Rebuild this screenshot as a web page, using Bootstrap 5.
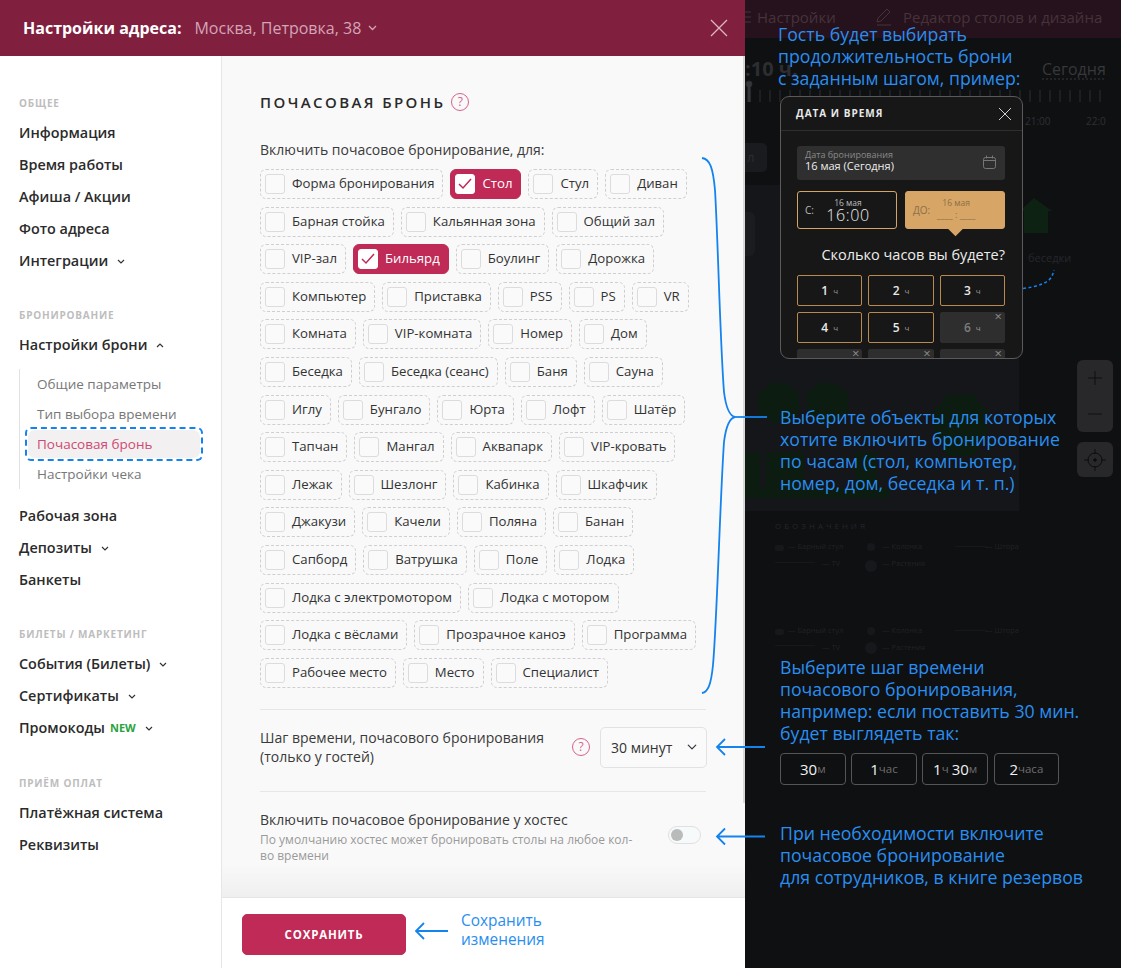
<!doctype html>
<html lang="ru"><head><meta charset="utf-8">
<title>Почасовая бронь</title>
<link href="https://cdn.jsdelivr.net/npm/bootstrap@5.3.0/dist/css/bootstrap.min.css" rel="stylesheet">
<style>
html,body{margin:0;height:968px;overflow:hidden;background:#0f1012;font-family:"Open Sans","Liberation Sans",sans-serif;color:#2a2a2a}
.stage{position:relative;width:1121px;height:968px;overflow:hidden}
.panel{width:745px;height:968px;background:#fff;position:relative;z-index:2}
.tophead{height:56px;background:#811f3f;padding:0 23px}
.tophead b{font-size:16px;font-weight:700;color:#fff}
.tophead span{font-size:16px;color:#d3a5b6;margin-left:13px}
.tophead .chev{color:#d3a5b6;margin-left:7px}
.xbtn{margin-left:auto;color:#dcb9c5;margin-right:-6px}
.sidecol{width:222px;border-right:1px solid #e6e6e6;padding:41px 0 0 19px;flex:none}
.grp{font-size:10px;font-weight:700;letter-spacing:.8px;color:#bdbdbd;line-height:12px;margin-bottom:8px}
.grpgap{margin-top:32px}
.grpgap.wide{margin-top:33px}
.sidecol .nav-link{padding:0;height:32px;line-height:32px;font-size:14.4px;font-weight:550;color:#2b2b2b;display:flex;align-items:center}
.chev{display:inline-block;margin-left:9px;flex:none}
.newtag{color:#2aa33e;font-size:11px;font-weight:700;margin-left:5px}
.subnav{border-left:1px solid #e2e2e2;margin:8px 0 11px;padding:0}
.subnav a{display:block;height:30px;line-height:30px;font-size:13.5px;color:#777;padding-left:17px;text-decoration:none;font-weight:400}
.subnav a.cur{color:#cf4a73;background:#f2f0f1;border-radius:7px;width:172px;padding-left:9px;position:relative;height:28px;line-height:28px;margin:1px 0 1px 8px}
.cur::after{content:"";position:absolute;inset:-3px;border:2px dashed #1483ee;border-radius:6px}
.mainwrap{flex:1;min-width:0;position:relative;display:flex;flex-direction:column}
.scrollarea{flex:1;background:#f9f9f9;padding:33px 38px 0;position:relative;overflow:hidden}
.scrollarea::before{content:"";position:absolute;left:0;right:0;bottom:0;height:34px;background:linear-gradient(rgba(240,240,240,0),#efefef)}
.scrollarea::after{content:"";position:absolute;top:0;right:0;width:2px;bottom:94px;background:#d9d9d9}
.ttl{font-size:15px;font-weight:600;letter-spacing:2.4px;color:#2a2a2a;margin:0;line-height:26px}
.qm{width:18px;height:18px;border:1px solid #d9628a;color:#d9628a;border-radius:50%;font-size:12px;line-height:16px;text-align:center;flex:none;display:inline-block}
.lbl{font-size:14px;line-height:20px;color:#3a3a3a;margin:25px 0 9px}
.chips{display:flex;flex-wrap:wrap;gap:7.6px 7px;width:446px}
.chipx{height:30px;border:1px dashed #cfcfcf;border-radius:6px;display:flex;align-items:center;padding:0 8px 0 4px;font-size:13.2px;color:#333;white-space:nowrap}
.chipx i{display:block;width:20px;height:20px;border:1px solid #dcdcdc;border-radius:3px;background:#fafafa;margin-right:7px;flex:none}
.chipx.on{background:#bf2a56;border:1px solid #bf2a56;color:#fff}
.chipx.on i{background:#fff;border-color:#fff;display:flex;align-items:center;justify-content:center}
.rule{border-top:1px solid #e6e6e6;margin:0;opacity:1;width:446px}
.steprow{width:446px;height:81px;padding-bottom:6px}
.steprow p,.hostrow p{font-size:14px;line-height:19px;color:#3a3a3a;margin:0}
.stepsel{width:107px;height:41px;font-size:14px;background-color:#fafafa;border:1px solid #e2e2e2;padding:0 10px;border-radius:5px;color:#333;background-position:right 8px center;background-size:12px 10px;box-shadow:none;margin-right:-1px}
.hostrow{width:446px;padding-top:18px}
.hostrow small{display:block;font-size:12px;line-height:16px;color:#9a9a9a;margin-top:3px;width:380px}
.swwrap{padding:0;margin:2px 5px 0 0;min-height:0}
.swwrap .form-check-input{width:33px;height:18px;margin:0;float:none;background-color:#f7fafa;border:1px solid #e0e0e0}
.footbar{height:71px;background:#fff;border-top:1px solid #e6e6e6;padding:0 0 0 20px;flex:none}
.savebtn{width:164px;height:41px;background:#bf2a56;border:1px solid #bf2a56;color:#fff;font-size:11.5px;font-weight:700;letter-spacing:.8px;border-radius:5px;margin-top:16px}
.savebtn:hover{background:#bf2a56;color:#fff}
.anno{position:absolute;color:#2a8ef0;font-size:17.7px;font-weight:500;line-height:22px;z-index:5;white-space:nowrap}
.savenote{position:absolute;left:461px;top:911px;color:#2a8ef0;font-size:15.4px;line-height:19px;z-index:5}
.overlay{position:absolute;inset:0;z-index:4;pointer-events:none}
/* ghost page behind the dim layer */
.ghost{position:absolute;left:745px;top:0;width:376px;height:968px;color:#2c2d30}
.ghostband{height:38px;background:#25121c}
.gh{position:absolute;white-space:nowrap}
.mapzone{position:absolute;left:0;top:185px;width:274px;height:326px;background:#14161a}
.zoomctl{position:absolute;left:332px;width:36px;background:#28282a;border-radius:6px}
.ghostbtn{position:absolute;left:0;top:143px;width:22px;height:29px;background:#1a1b1e;border-radius:0 5px 5px 0;font-size:13px;line-height:29px;color:#2c2d30;padding-left:2px}
.ghostpill{position:absolute;left:0;top:212px;width:10px;height:44px;background:#1b1c1f;border-radius:0 6px 6px 0}
.demo{position:absolute;left:780px;top:96px;width:243px;height:263px;background:#171717;border:1px solid #5a5a5a;border-radius:9px;overflow:hidden;z-index:5;color:#fff}
.demohead{height:34px;border-bottom:1px solid #2e2e2e;padding:0 10px 0 15px;font-size:10px;font-weight:700;letter-spacing:1px;color:#e8e8e8}
.demobody{padding:15px 17px 0 16px}
.datefld{height:34px;background:#2f2f2f;border-radius:3px;padding:4px 9px 0 8px;position:relative}
.datefld small{display:block;font-size:9px;line-height:10px;color:#8a8a8a}
.datefld div{font-size:11px;line-height:12px;color:#eee}
.datefld svg{position:absolute;right:9px;top:9px}
.timerow{display:grid;grid-template-columns:100px 100px;gap:8px;margin-top:11px}
.tbox{height:38px;border-radius:3px;border:1px solid #d6a565;display:flex;align-items:center;font-size:10px;padding-left:7px;position:relative;color:#bbb}
.tbox .mid{flex:1;text-align:center;line-height:1;padding-right:14px}
.tbox .mid small{display:block;font-size:8.5px;line-height:10px}
.tbox .mid strong{display:block;font-size:16px;font-weight:300;color:#eee;line-height:15px;letter-spacing:.6px}
.tbox.pick{background:#d7a565;color:#8c7048}
.tbox.pick .mid{padding-right:22px}
.tbox.pick::after{content:"";position:absolute;left:44px;bottom:-6px;width:11px;height:11px;background:#d7a565;transform:rotate(45deg)}
.blank{display:block;color:#8c7048;font-size:9px;line-height:14px;letter-spacing:0}
.howlong{font-size:14.5px;text-align:right;color:#ededed;line-height:20px;margin:16px 0 10px}
.hgrid{display:grid;grid-template-columns:repeat(3,1fr);gap:6px}
.hbtn{height:31px;border:1px solid #b98a50;border-radius:2px;display:flex;align-items:center;justify-content:center;font-size:12px;font-weight:600;color:#e9e9e9;position:relative}
.hbtn small{font-size:8px;font-weight:400;color:#999;margin-left:5px}
.hbtn.off{background:#2e2e2e;border-color:#2e2e2e;color:#7c7c7c}
.hbtn.off::after{content:"×";position:absolute;right:2px;top:-4px;font-size:13px;font-weight:400;color:#8a8a8a;line-height:14px}
.tstrip{position:absolute;left:780px;top:753px;display:grid;grid-template-columns:repeat(4,65.6px);gap:5.6px;z-index:5}
.tcell{height:32px;border:1px solid #555;border-radius:4px;display:flex;align-items:center;justify-content:center;color:#f2f2f2;font-size:15px;white-space:nowrap}
.tcell small{color:#6e6e6e;font-size:11.5px}
.lg{font-size:7.5px;color:#212226}
</style></head><body>
<div class="stage">

<div class="ghost">
  <div class="ghostband"></div>
  <div class="gh" style="left:12px;top:6px;font-size:15px;color:#46323b">Настройки</div>
  <div class="gh" style="left:158px;top:6px;font-size:15px;color:#46323b">Редактор столов и дизайна</div>
  <svg class="gh" style="left:0;top:0" width="376" height="130" fill="none" stroke="#2e2f32"><path d="M133 18l9-9 3 3-9 9-4 1zM132 25h14" stroke="#46323b"/><path d="M0 12h6M0 17h6M0 22h6" stroke="#46323b"/><path d="M5 90v12M15 90v12M25 90v12M35 90v12M45 90v12M55 90v12M65 90v12M75 90v12M85 90v12M95 90v12M105 90v12M115 90v12M125 90v12M135 90v12M145 90v12M155 90v12M165 90v12M175 90v12M185 90v12M195 90v12M205 90v12M215 90v12M225 90v12M235 90v12M245 90v12M255 90v12M265 90v12M275 90v12M285 90v12M295 90v12M305 90v12M315 90v12M325 90v12M335 90v12M345 90v12M355 90v12"/><path d="M297 79h64" stroke-dasharray="2 2" stroke="#37383b"/><circle cx="4" cy="84" r="3" fill="#36373a"/><path d="M4 84v18" stroke="#36373a" stroke-width="3"/></svg>
  <div class="gh" style="left:0;top:54px;font-size:20px;font-weight:700;color:#2d2e31">:10 ч.</div>
  <div class="gh" style="left:297px;top:57px;font-size:16px;color:#37383b">Сегодня</div>
  <div class="gh" style="left:280px;top:114px;font-size:10px;color:#2f3033">21:00</div>
  <div class="gh" style="left:341px;top:114px;font-size:10px;color:#2f3033">22:0</div>
  <div class="ghostbtn">л</div>
  <div class="mapzone"></div>
  <div class="ghostpill"></div>
  <svg class="gh" style="left:275px;top:198px" width="32" height="38" fill="#0d2213"><path d="M14 0l18 13h-4v22H4V13H0z"/></svg>
  <svg class="gh" style="left:0;top:380px" width="276" height="130" fill="#0c1c10"><rect x="13" y="8" width="41" height="30" rx="9"/><rect x="62" y="8" width="41" height="30" rx="9"/><rect x="24" y="3" width="22" height="40" rx="3"/><rect x="70" y="3" width="22" height="40" rx="3"/><rect x="0" y="108" width="145" height="10" rx="2"/><rect x="0" y="72" width="15" height="36"/><rect x="21" y="72" width="38" height="36"/><rect x="110" y="72" width="22" height="36"/><rect x="198" y="14" width="35" height="62" rx="7"/><rect x="189" y="24" width="53" height="38" rx="9"/></svg>
  <div class="gh" style="left:30px;top:520px;font-size:8px;letter-spacing:3px;color:#25262a">ОБОЗНАЧЕНИЯ</div>
  <svg class="gh" style="left:30px;top:540px" width="240" height="120" fill="#17181b" stroke="none"><rect x="0" y="5" width="9" height="6" rx="2"/><rect x="0" y="89" width="9" height="6" rx="2"/><rect x="0" y="22" width="40" height="1"/><rect x="0" y="105" width="40" height="1"/><circle cx="96" cy="7" r="4"/><circle cx="96" cy="91" r="4"/><circle cx="96" cy="26" r="6"/><circle cx="96" cy="108" r="6"/><rect x="180" y="6" width="32" height="1"/><rect x="180" y="90" width="32" height="1"/></svg>
  <div class="gh lg" style="left:43px;top:541px">— Барный стул</div>
  <div class="gh lg" style="left:137px;top:541px">— Колонка</div>
  <div class="gh lg" style="left:240px;top:541px">— Штора</div>
  <div class="gh lg" style="left:77px;top:558px">— TV</div>
  <div class="gh lg" style="left:137px;top:558px">— Растения</div>
  <div class="gh lg" style="left:43px;top:625px">— Барный стул</div>
  <div class="gh lg" style="left:137px;top:625px">— Колонка</div>
  <div class="gh lg" style="left:240px;top:625px">— Штора</div>
  <div class="gh lg" style="left:77px;top:642px">— TV</div>
  <div class="gh lg" style="left:137px;top:642px">— Растения</div>
  <div class="gh" style="left:283px;top:250px;font-size:11px;color:#26272b">беседки</div>
  <div class="zoomctl d-flex flex-column align-items-center justify-content-around" style="top:360px;height:72px"><svg width="16" height="16" stroke="#0f0f0f" fill="none"><path d="M8 1v14M1 8h14"/></svg><svg width="16" height="16" stroke="#111" fill="none"><path d="M1 8h14"/></svg></div>
  <div class="zoomctl d-flex align-items-center justify-content-center" style="top:442px;height:35px"><svg width="24" height="24" stroke="#0c0c0c" fill="none"><circle cx="12" cy="12" r="7"/><circle cx="12" cy="12" r="1.3" fill="#0c0c0c"/><path d="M12 1v5M12 18v5M1 12h5M18 12h5"/></svg></div>
</div>

<div class="panel d-flex flex-column">
  <header class="tophead d-flex align-items-center flex-none">
    <b>Настройки адреса:</b><span>Москва, Петровка, 38</span>
    <svg class="chev" width="9" height="6" viewBox="0 0 9 6" fill="none" stroke="currentColor" stroke-width="1.3"><path d="M1 1l3.5 3.5L8 1"/></svg>
    <svg class="xbtn" width="18" height="18" viewBox="0 0 18 18" fill="none" stroke="currentColor" stroke-width="1.2"><path d="M1 1l16 16M17 1L1 17"/></svg>
  </header>
  <div class="d-flex flex-grow-1" style="min-height:0">
    <aside class="sidecol">
      <div class="grp">ОБЩЕЕ</div>
      <nav class="nav flex-column">
        <a class="nav-link" href="#">Информация</a>
        <a class="nav-link" href="#">Время работы</a>
        <a class="nav-link" href="#">Афиша / Акции</a>
        <a class="nav-link" href="#">Фото адреса</a>
        <a class="nav-link" href="#">Интеграции<svg class="chev" width="8" height="5" viewBox="0 0 8 5" fill="none" stroke="#333" stroke-width="1.2"><path d="M1 1l3 3 3-3"/></svg></a>
      </nav>
      <div class="grp grpgap">БРОНИРОВАНИЕ</div>
      <nav class="nav flex-column">
        <a class="nav-link" href="#">Настройки брони<svg class="chev" width="8" height="5" viewBox="0 0 8 5" fill="none" stroke="#333" stroke-width="1.2"><path d="M1 4l3-3 3 3"/></svg></a>
        <div class="subnav">
          <a href="#">Общие параметры</a>
          <a href="#">Тип выбора времени</a>
          <a href="#" class="cur">Почасовая бронь</a>
          <a href="#">Настройки чека</a>
        </div>
        <a class="nav-link" href="#">Рабочая зона</a>
        <a class="nav-link" href="#">Депозиты<svg class="chev" width="8" height="5" viewBox="0 0 8 5" fill="none" stroke="#333" stroke-width="1.2"><path d="M1 1l3 3 3-3"/></svg></a>
        <a class="nav-link" href="#">Банкеты</a>
      </nav>
      <div class="grp grpgap">БИЛЕТЫ / МАРКЕТИНГ</div>
      <nav class="nav flex-column">
        <a class="nav-link" href="#">События (Билеты)<svg class="chev" width="8" height="5" viewBox="0 0 8 5" fill="none" stroke="#333" stroke-width="1.2"><path d="M1 1l3 3 3-3"/></svg></a>
        <a class="nav-link" href="#">Сертификаты<svg class="chev" width="8" height="5" viewBox="0 0 8 5" fill="none" stroke="#333" stroke-width="1.2"><path d="M1 1l3 3 3-3"/></svg></a>
        <a class="nav-link" href="#">Промокоды<span class="newtag">NEW</span><svg class="chev" width="8" height="5" viewBox="0 0 8 5" fill="none" stroke="#333" stroke-width="1.2"><path d="M1 1l3 3 3-3"/></svg></a>
      </nav>
      <div class="grp grpgap wide">ПРИЁМ ОПЛАТ</div>
      <nav class="nav flex-column">
        <a class="nav-link" href="#">Платёжная система</a>
        <a class="nav-link" href="#">Реквизиты</a>
      </nav>
    </aside>
    <div class="mainwrap">
      <main class="scrollarea">
        <div class="d-flex align-items-center" style="gap:6px"><h1 class="ttl">ПОЧАСОВАЯ БРОНЬ</h1><span class="qm">?</span></div>
        <p class="lbl">Включить почасовое бронирование, для:</p>
        <div class="chips">
          <label class="chipx"><i></i>Форма бронирования</label>
          <label class="chipx on"><i><svg width="14" height="12" viewBox="0 0 14 12" fill="none" stroke="#bf2a56" stroke-width="1.5"><path d="M1 6l4 4 8-9"/></svg></i>Стол</label>
          <label class="chipx"><i></i>Стул</label>
          <label class="chipx"><i></i>Диван</label>
          <label class="chipx"><i></i>Барная стойка</label>
          <label class="chipx"><i></i>Кальянная зона</label>
          <label class="chipx"><i></i>Общий зал</label>
          <label class="chipx"><i></i>VIP-зал</label>
          <label class="chipx on"><i><svg width="14" height="12" viewBox="0 0 14 12" fill="none" stroke="#bf2a56" stroke-width="1.5"><path d="M1 6l4 4 8-9"/></svg></i>Бильярд</label>
          <label class="chipx"><i></i>Боулинг</label>
          <label class="chipx"><i></i>Дорожка</label>
          <label class="chipx"><i></i>Компьютер</label>
          <label class="chipx"><i></i>Приставка</label>
          <label class="chipx"><i></i>PS5</label>
          <label class="chipx"><i></i>PS</label>
          <label class="chipx"><i></i>VR</label>
          <label class="chipx"><i></i>Комната</label>
          <label class="chipx"><i></i>VIP-комната</label>
          <label class="chipx"><i></i>Номер</label>
          <label class="chipx"><i></i>Дом</label>
          <label class="chipx"><i></i>Беседка</label>
          <label class="chipx"><i></i>Беседка (сеанс)</label>
          <label class="chipx"><i></i>Баня</label>
          <label class="chipx"><i></i>Сауна</label>
          <label class="chipx"><i></i>Иглу</label>
          <label class="chipx"><i></i>Бунгало</label>
          <label class="chipx"><i></i>Юрта</label>
          <label class="chipx"><i></i>Лофт</label>
          <label class="chipx"><i></i>Шатёр</label>
          <label class="chipx"><i></i>Тапчан</label>
          <label class="chipx"><i></i>Мангал</label>
          <label class="chipx"><i></i>Аквапарк</label>
          <label class="chipx"><i></i>VIP-кровать</label>
          <label class="chipx"><i></i>Лежак</label>
          <label class="chipx"><i></i>Шезлонг</label>
          <label class="chipx"><i></i>Кабинка</label>
          <label class="chipx"><i></i>Шкафчик</label>
          <label class="chipx"><i></i>Джакузи</label>
          <label class="chipx"><i></i>Качели</label>
          <label class="chipx"><i></i>Поляна</label>
          <label class="chipx"><i></i>Банан</label>
          <label class="chipx"><i></i>Сапборд</label>
          <label class="chipx"><i></i>Ватрушка</label>
          <label class="chipx"><i></i>Поле</label>
          <label class="chipx"><i></i>Лодка</label>
          <label class="chipx"><i></i>Лодка с электромотором</label>
          <label class="chipx"><i></i>Лодка с мотором</label>
          <label class="chipx"><i></i>Лодка с вёслами</label>
          <label class="chipx"><i></i>Прозрачное каноэ</label>
          <label class="chipx"><i></i>Программа</label>
          <label class="chipx"><i></i>Рабочее место</label>
          <label class="chipx"><i></i>Место</label>
          <label class="chipx"><i></i>Специалист</label>
        </div>
        <hr class="rule" style="margin-top:21px">
        <div class="steprow d-flex align-items-center">
          <p class="flex-grow-1">Шаг времени, почасового бронирования<br>(только у гостей)</p>
          <span class="qm" style="margin-right:10px">?</span>
          <select class="form-select stepsel" aria-label="Шаг"><option>30 минут</option></select>
        </div>
        <hr class="rule">
        <div class="hostrow d-flex align-items-center justify-content-between">
          <div><p>Включить почасовое бронирование у хостес</p><small>По умолчанию хостес может бронировать столы на любое кол-во времени</small></div>
          <div class="form-check form-switch swwrap"><input class="form-check-input" type="checkbox" role="switch" aria-label="Хостес"></div>
        </div>
      </main>
      <footer class="footbar"><button class="btn savebtn" type="button">СОХРАНИТЬ</button></footer>
    </div>
  </div>
</div>

<div class="demo">
  <div class="demohead d-flex align-items-center justify-content-between">ДАТА И ВРЕМЯ<svg width="14" height="14" viewBox="0 0 14 14" fill="none" stroke="#cfcfcf"><path d="M1 1l12 12M13 1L1 13"/></svg></div>
  <div class="demobody">
    <div class="datefld"><small>Дата бронирования</small><div>16 мая (Сегодня)</div><svg width="13" height="14" viewBox="0 0 13 14" fill="none" stroke="#777"><rect x=".5" y="2.5" width="12" height="11" rx="2"/><path d="M.5 5.5h12M3.5 .5v3M9.5 .5v3"/></svg></div>
    <div class="timerow">
      <div class="tbox"><span>С:</span><div class="mid"><small>16 мая</small><strong>16:00</strong></div></div>
      <div class="tbox pick"><span>ДО:</span><div class="mid"><small>16 мая</small><span class="blank">____ : ____</span></div></div>
    </div>
    <div class="howlong">Сколько часов вы будете?</div>
    <div class="hgrid">
      <div class="hbtn">1<small>ч</small></div><div class="hbtn">2<small>ч</small></div><div class="hbtn">3<small>ч</small></div>
      <div class="hbtn">4<small>ч</small></div><div class="hbtn">5<small>ч</small></div><div class="hbtn off">6<small>ч</small></div>
      <div class="hbtn off"></div><div class="hbtn off"></div><div class="hbtn off"></div>
    </div>
  </div>
</div>

<div class="anno" style="left:778px;top:23px">Гость будет выбирать<br>продолжительность брони<br>с заданным шагом, пример:</div>
<div class="anno" style="left:780px;top:406px">Выберите объекты для которых<br>хотите включить бронирование<br>по часам (стол, компьютер,<br>номер, дом, беседка и т. п.)</div>
<div class="anno" style="left:780px;top:656px">Выберите шаг времени<br>почасового бронирования,<br>например: если поставить 30 мин.<br>будет выглядеть так:</div>
<div class="tstrip">
  <div class="tcell">30<small>м</small></div>
  <div class="tcell">1<small>час</small></div>
  <div class="tcell">1<small>ч&nbsp;</small>30<small>м</small></div>
  <div class="tcell">2<small>часа</small></div>
</div>
<div class="anno" style="left:780px;top:822px">При необходимости включите<br>почасовое бронирование<br>для сотрудников, в книге резервов</div>
<div class="savenote">Сохранить<br>изменения</div>

<svg class="overlay" width="1121" height="968" fill="none" stroke="#1483ee" stroke-width="1.8">
  <path d="M702 158C710 159 713 168 715 190C718 240 720 340 724 392C726 408 730 416 735 417C730 418 726 426 724 442C720 500 717 620 713 665C711 685 708 692 702 693"/>
  <path d="M735 417h32"/>
  <path d="M717 747h48M725 739l-8 8 8 8"/>
  <path d="M717 836.500h48M725 828.500l-8 8 8 8"/>
  <path d="M416 931h32M424 923l-8 8 8 8"/>
  <path d="M1012 289c14 0 30-3 37-9 3-3 4-6 5-10" stroke-width="1.500" stroke-dasharray="3 2.500"/>
  <path d="M1018 283l-6 6 6 6" stroke-width="1.500"/>
</svg>
</div>
</body></html>
